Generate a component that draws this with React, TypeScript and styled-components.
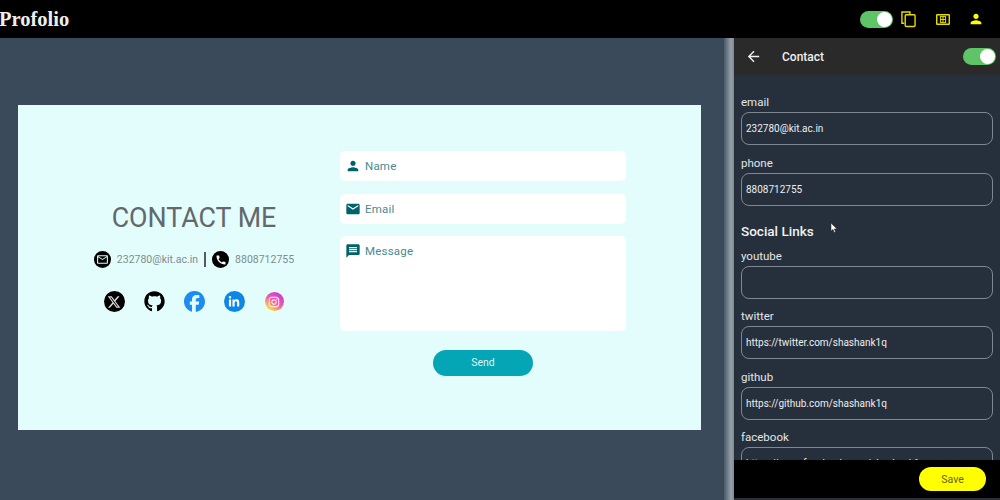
import { ReactNode } from "react";
import styled, { createGlobalStyle } from "styled-components";
import {
  FaFacebook,
  FaGithub,
  FaInstagram,
  FaLinkedinIn,
  FaXTwitter,
} from "react-icons/fa6";
import {
  MdArrowBack,
  MdCall,
  MdEmail,
  MdMailOutline,
  MdMessage,
  MdPerson,
} from "react-icons/md";

const GlobalStyle = createGlobalStyle`
  html, body {
    margin: 0;
    padding: 0;
    height: 100%;
    overflow: hidden;
    font-family: Roboto, "Liberation Sans", sans-serif;
  }
  * { box-sizing: border-box; }
`;

const contactFields = [
  { label: "email", value: "232780@kit.ac.in" },
  { label: "phone", value: "8808712755" },
];

const socialFields = [
  { label: "youtube", value: "" },
  { label: "twitter", value: "https://twitter.com/shashank1q" },
  { label: "github", value: "https://github.com/shashank1q" },
  { label: "facebook", value: "https://www.facebook.com/shashank1q" },
];

const Toggle = () => (
  <ToggleTrack>
    <ToggleKnob />
  </ToggleTrack>
);

const Field = ({ label, value }: { label: string; value: string }) => (
  <FieldBlock>
    <FieldLabel>{label}</FieldLabel>
    <FieldInput>{value}</FieldInput>
  </FieldBlock>
);

const FormRow = ({
  icon,
  label,
  tall,
}: {
  icon: ReactNode;
  label: string;
  tall?: boolean;
}) => (
  <FormBox $tall={tall}>
    <FormIcon>{icon}</FormIcon>
    <FormLabel>{label}</FormLabel>
  </FormBox>
);

export default function App() {
  return (
    <>
      <GlobalStyle />
      <Page>
        <TopBar>
          <Logo>Profolio</Logo>
          <TopActions>
            <Toggle />
            <TopIcon viewBox="0 0 16 18" width="15" height="18">
              <path d="M3.5 13.5H1V1.5h8.5v3" />
              <rect x="4.5" y="4.5" width="10.5" height="12.5" rx="1" />
            </TopIcon>
            <TopIcon viewBox="0 0 14 11" width="14" height="11">
              <rect x="0.7" y="0.7" width="12.6" height="9.6" rx="0.8" />
              <rect x="4.4" y="2.6" width="5.2" height="5.8" strokeWidth="1" />
              <path d="M7 2.6v5.8M4.4 5.5h5.2" strokeWidth="1" />
            </TopIcon>
            <PersonIcon>
              <MdPerson size={16} />
            </PersonIcon>
          </TopActions>
        </TopBar>
        <Body>
          <Main>
            <Card>
              <InfoColumn>
                <Title>CONTACT ME</Title>
                <InfoRow>
                  <InfoBadge>
                    <MdMailOutline size={13} color="#dff" />
                  </InfoBadge>
                  <InfoText>232780@kit.ac.in</InfoText>
                  <InfoDivider />
                  <InfoBadge>
                    <MdCall size={12} color="#fff" />
                  </InfoBadge>
                  <InfoText>8808712755</InfoText>
                </InfoRow>
                <SocialRow>
                  <SocialCircle $bg="#000">
                    <FaXTwitter size={14} color="#dcdcdc" />
                  </SocialCircle>
                  <SocialGlyph $color="#000">
                    <FaGithub size={21} />
                  </SocialGlyph>
                  <SocialGlyph $color="#1b8cf0">
                    <FaFacebook size={21} />
                  </SocialGlyph>
                  <SocialCircle $bg="#0d87e6">
                    <FaLinkedinIn size={12} color="#fff" />
                  </SocialCircle>
                  <InstaCircle>
                    <FaInstagram size={12} color="#fff" />
                  </InstaCircle>
                </SocialRow>
              </InfoColumn>
              <FormColumn>
                <FormRow icon={<MdPerson size={16} />} label="Name" />
                <FormRow icon={<MdEmail size={16} />} label="Email" />
                <FormRow icon={<MdMessage size={16} />} label="Message" tall />
                <SendButton>Send</SendButton>
              </FormColumn>
            </Card>
          </Main>
          <Divider />
          <Panel>
            <PanelHead>
              <MdArrowBack size={17} color="#f2f2f2" />
              <PanelTitle>Contact</PanelTitle>
              <Toggle />
            </PanelHead>
            <PanelBody>
              {contactFields.map((f) => (
                <Field key={f.label} {...f} />
              ))}
              <SectionTitle>Social Links</SectionTitle>
              {socialFields.map((f) => (
                <Field key={f.label} {...f} />
              ))}
              <Cursor viewBox="0 0 8 12" width="8" height="12">
                <path d="M1 1v8l2-1.6 1.3 3 1.3-.6-1.3-2.9H7z" />
              </Cursor>
            </PanelBody>
            <PanelFooter>
              <SaveButton>Save</SaveButton>
            </PanelFooter>
          </Panel>
        </Body>
      </Page>
    </>
  );
}

const Page = styled.div`
  width: 1000px;
  height: 500px;
  display: flex;
  flex-direction: column;
  background: #3a4a5b;
  overflow: hidden;
`;

const TopBar = styled.header`
  height: 38px;
  flex-shrink: 0;
  background: #000;
  display: flex;
  align-items: center;
  justify-content: space-between;
  padding: 0 16px 0 0;
`;

const Logo = styled.div`
  margin-left: -1px;
  font-family: "Liberation Serif", serif;
  font-size: 20.5px;
  font-weight: 700;
  color: #eeeeee;
`;

const TopActions = styled.div`
  display: flex;
  align-items: center;
`;

const ToggleTrack = styled.div`
  width: 33px;
  height: 17px;
  border-radius: 9px;
  background: #5fc466;
  display: flex;
  align-items: center;
  justify-content: flex-end;
  padding-right: 1px;
`;

const ToggleKnob = styled.div`
  width: 15px;
  height: 15px;
  border-radius: 50%;
  background: #fff;
`;

const TopIcon = styled.svg`
  fill: none;
  stroke: #e3dc00;
  stroke-width: 1.5;
  margin-left: 8px;
  & + & {
    margin-left: 20px;
  }
`;

const PersonIcon = styled.span`
  display: flex;
  color: #ffff00;
  margin-left: 18px;
`;

const Body = styled.div`
  flex: 1;
  display: flex;
  min-height: 0;
`;

const Main = styled.main`
  width: 724px;
  flex-shrink: 0;
  padding: 67px 23px 0 18px;
`;

const Card = styled.section`
  height: 325px;
  background: #e3fdfd;
  display: flex;
`;

const InfoColumn = styled.div`
  width: 322px;
  padding: 97px 0 0 30px;
  display: flex;
  flex-direction: column;
  align-items: center;
`;

const Title = styled.h1`
  margin: 0;
  font-size: 26.8px;
  line-height: 32px;
  font-weight: 400;
  color: #62686b;
`;

const InfoRow = styled.div`
  margin-top: 17px;
  display: flex;
  align-items: center;
`;

const InfoBadge = styled.span`
  width: 17px;
  height: 17px;
  border-radius: 50%;
  background: #000;
  display: flex;
  align-items: center;
  justify-content: center;
`;

const InfoText = styled.span`
  margin-left: 6px;
  font-size: 10.5px;
  color: #7f8c8e;
`;

const InfoDivider = styled.span`
  width: 2px;
  height: 15px;
  margin: 0 6px;
  background: #555b5e;
`;

const SocialRow = styled.div`
  margin-top: 23px;
  display: flex;
  align-items: center;
  gap: 19px;
`;

const SocialCircle = styled.span<{ $bg: string }>`
  width: 21px;
  height: 21px;
  border-radius: 50%;
  background: ${({ $bg }) => $bg};
  display: flex;
  align-items: center;
  justify-content: center;
`;

const SocialGlyph = styled.span<{ $color: string }>`
  display: flex;
  color: ${({ $color }) => $color};
`;

const InstaCircle = styled.span`
  width: 19px;
  height: 19px;
  margin: 0 1px;
  border-radius: 50%;
  background: linear-gradient(35deg, #ffd83a 15%, #f25ca8 50%, #c934e0 90%);
  display: flex;
  align-items: center;
  justify-content: center;
`;

const FormColumn = styled.div`
  width: 286px;
  padding-top: 46px;
  display: flex;
  flex-direction: column;
  gap: 12.5px;
`;

const FormBox = styled.div<{ $tall?: boolean }>`
  height: ${({ $tall }) => ($tall ? "95px" : "30px")};
  background: #fff;
  border-radius: 5px;
  display: flex;
  align-items: flex-start;
  padding: 7px 5px;
`;

const FormIcon = styled.span`
  display: flex;
  width: 20px;
  color: #00636b;
`;

const FormLabel = styled.span`
  font-size: 11.5px;
  line-height: 16px;
  letter-spacing: 0.2px;
  color: #4a8a8f;
`;

const SendButton = styled.button`
  align-self: center;
  width: 100px;
  height: 26px;
  margin-top: 6px;
  border: 0;
  border-radius: 13px;
  background: #04a5b4;
  color: #d8f6f8;
  font-family: inherit;
  font-size: 10.5px;
`;

const Divider = styled.div`
  width: 10px;
  flex-shrink: 0;
  background: linear-gradient(90deg, #4a5a69, #95a0aa 70%, #7d8790);
`;

const Panel = styled.aside`
  flex: 1;
  min-width: 0;
  display: flex;
  flex-direction: column;
  background: #25303c;
`;

const PanelHead = styled.div`
  height: 37px;
  flex-shrink: 0;
  background: #2a2a2a;
  display: flex;
  align-items: center;
  padding: 0 4px 0 11px;
`;

const PanelTitle = styled.div`
  flex: 1;
  margin-left: 20px;
  font-size: 12px;
  font-weight: 500;
  color: #f0f0f0;
`;

const PanelBody = styled.div`
  flex: 1;
  min-height: 0;
  overflow: hidden;
  position: relative;
  padding: 20px 7px 0;
`;

const FieldBlock = styled.div`
  margin-bottom: 10.5px;
`;

const FieldLabel = styled.div`
  font-size: 11.5px;
  line-height: 14px;
  margin-bottom: 3px;
  color: #e4e6e8;
`;

const FieldInput = styled.div`
  height: 33px;
  border: 1.5px solid #7f8890;
  border-radius: 8px;
  padding: 0 4px;
  display: flex;
  align-items: center;
  white-space: nowrap;
  overflow: hidden;
  font-size: 10px;
  color: #eceeef;
`;

const SectionTitle = styled.h2`
  margin: 16px 0 9px;
  font-size: 13.5px;
  line-height: 18px;
  font-weight: 500;
  color: #f0f2f3;
`;

const Cursor = styled.svg`
  position: absolute;
  left: 96px;
  top: 147px;
  fill: #fff;
  stroke: #222;
  stroke-width: 0.5;
`;

const PanelFooter = styled.div`
  height: 40px;
  flex-shrink: 0;
  background: #000;
  border-bottom: 2px solid #2b2e32;
  display: flex;
  align-items: center;
  justify-content: flex-end;
  padding-right: 14px;
`;

const SaveButton = styled.button`
  width: 67px;
  height: 24px;
  border: 0;
  border-radius: 12px;
  background: #ffff00;
  color: #5e5e18;
  font-family: inherit;
  font-size: 10.5px;
`;
